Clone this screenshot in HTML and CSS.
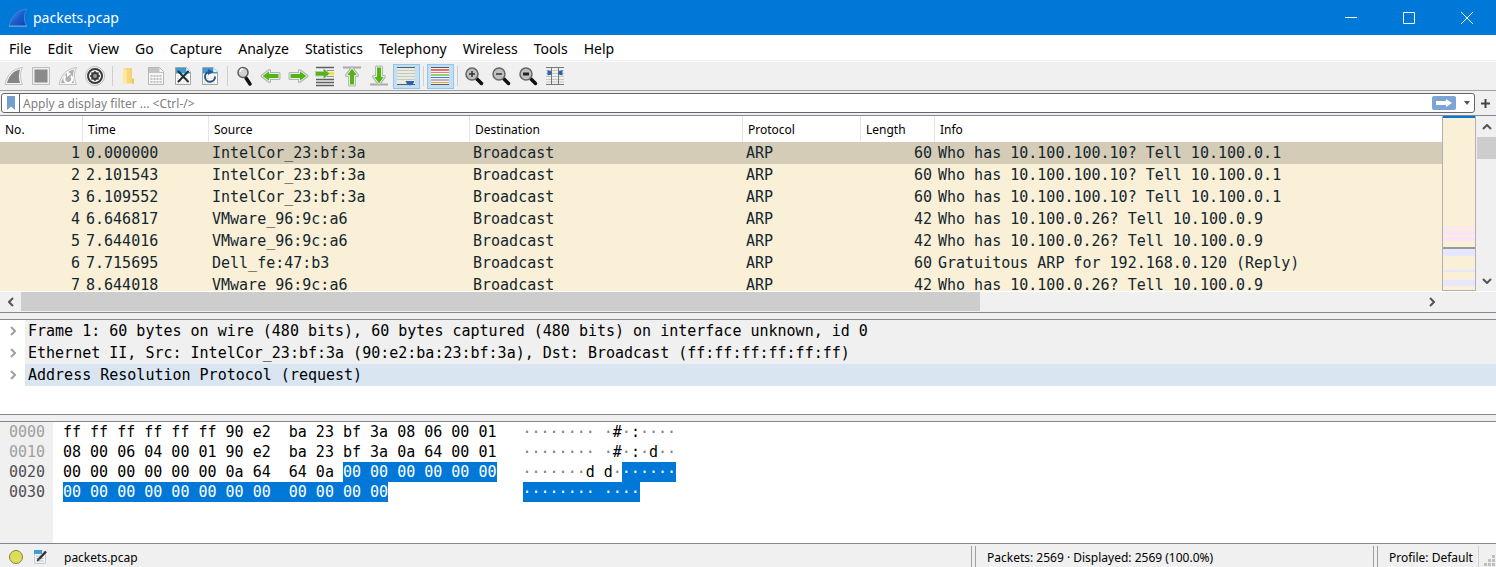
FILE: index.html
```html
<!DOCTYPE html>
<html lang="en">
<head>
<meta charset="utf-8">
<title>packets.pcap</title>
<link rel="stylesheet" href="styles.css">
</head>
<body>
<svg class="defs" aria-hidden="true">
  <defs>
    <linearGradient id="finBlue" x1="0" y1="0" x2="1" y2="1"><stop offset="0" stop-color="#5ea3f2"/><stop offset=".5" stop-color="#1c5fd0"/><stop offset="1" stop-color="#0a3fae"/></linearGradient>
    <linearGradient id="folderFill" x1="0" x2="1"><stop offset="0" stop-color="#fbe08c"/><stop offset="1" stop-color="#f3cd6d"/></linearGradient>
    <g id="doc">
      <path d="M4.500 3.500h11l4 4v13h-15z" fill="#fff" stroke="#a4a4a4"/>
      <path d="M5 4h10.500v4H19v1.500H5z" fill="#3f9ad4"/>
      <path d="M15.500 3.500v4h4z" fill="#e4f1fa"/>
      <path d="M6 12h12M6 14.500h12M6 17h12M6 19h12" stroke="#dedabd" stroke-dasharray="2 1"/>
    </g>
    <path id="arrow" d="M3 12l7.500-5.500v3H20v5h-9.500v3z" fill="#52b416"/>
    <path id="arrowEdge" d="M3 12l7.500-5.500v3H20v5h-9.500v3z" fill="#fff" stroke="#b4b4b4" stroke-width="3" stroke-linejoin="round"/>
    <path id="arrowRim" d="M3 12l7.500-5.500v3H20v5h-9.500v3z" fill="none" stroke="#e6f2de" stroke-width="1" stroke-linejoin="round"/>
    <g id="lens">
      <path d="M15 15l4.500 4.500" stroke="#111" stroke-width="3.500" stroke-linecap="round"/>
      <circle cx="10" cy="10" r="6" fill="#c0c0c0" stroke="#666" stroke-width="1.500"/>
    </g>
  </defs>
</svg>

<header class="titlebar">
  <svg class="logo" viewBox="0 0 20 20"><path d="M1 18.500C3 9 8 2.500 18.500 1 15.500 7 16 13 18.500 18.500z" fill="url(#finBlue)" stroke="#3f86d0" stroke-width="1"/><path d="M1 18h18" stroke="#7fa9d6"/></svg>
  <h1 class="title">packets.pcap</h1>
  <button class="win-btn" aria-label="Minimize"><svg viewBox="0 0 14 14"><path d="M1 6.500h12"/></svg></button>
  <button class="win-btn" aria-label="Maximize"><svg viewBox="0 0 14 14"><path d="M1.500 1.500h11v11h-11z"/></svg></button>
  <button class="win-btn" aria-label="Close"><svg viewBox="0 0 14 14"><path d="M1 1l12 12M13 1L1 13"/></svg></button>
</header>

<nav class="menubar">
  <button>File</button><button>Edit</button><button>View</button><button>Go</button><button>Capture</button><button>Analyze</button><button>Statistics</button><button>Telephony</button><button>Wireless</button><button>Tools</button><button>Help</button>
</nav>

<div class="toolbar" role="toolbar" aria-label="Main toolbar">
  <button aria-label="Start capture"><svg viewBox="0 0 24 24"><path d="M3 20.500C5 11 10 5 20.500 3.500 17.500 9 18 15 20.500 20.500z" fill="#f3f3f3" stroke="#c2c2c2" stroke-width="1"/><path d="M5 19C7 12 11 7 18 5.500 16.500 10 16.500 15 18 19z" fill="#858585"/></svg></button>
  <button aria-label="Stop capture"><svg viewBox="0 0 24 24"><path d="M3.500 3.500h17v17h-17z" fill="#f0f0f0" stroke="#bdbdbd"/><path d="M5.500 5.500h13v13h-13z" fill="#8b8b8b"/></svg></button>
  <button aria-label="Restart capture"><svg viewBox="0 0 24 24"><path d="M3 20.500C5 11 10 5 20.500 3.500 17.500 9 18 15 20.500 20.500z" fill="#f3f3f3" stroke="#c2c2c2"/><path d="M5 19C7 12 11 7 18 5.500 16.500 10 16.500 15 18 19z" fill="#b0b0b0"/><path d="M15 12a4 4 0 1 1-5.500 0" fill="none" stroke="#fff" stroke-width="2"/><path d="M11 7l4 3-4 3z" fill="#fff"/></svg></button>
  <button aria-label="Capture options"><svg viewBox="0 0 24 24"><circle cx="12" cy="12" r="9.500" fill="#f7f7f7" stroke="#bbb"/><circle cx="12" cy="12" r="7" fill="#f7f7f7" stroke="#3a3a3a" stroke-width="2"/><circle cx="12" cy="12" r="4" fill="#3a3a3a"/><path d="M12 7v10M7 12h10M8.500 8.500l7 7M15.500 8.500l-7 7" stroke="#3a3a3a" stroke-width="1.500"/><circle cx="12" cy="12" r="2" fill="#999"/></svg></button>
  <span class="sep"></span>
  <button aria-label="Open"><svg viewBox="0 0 24 24"><path d="M6 4h9v11l2 1v3.500H6z" fill="url(#folderFill)"/><path d="M6 4l3.500 2v14.500L6 19z" fill="#fde9a4"/><path d="M15 14.500h2v5h-2z" fill="#f0c45b"/></svg></button>
  <button aria-label="Save"><svg viewBox="0 0 24 24"><path d="M4.500 3.500h11l4 4v13h-15z" fill="#f7f7f7" stroke="#b5b5b5"/><path d="M5 4h10.500v4H19v1H5z" fill="#c4c4c4"/><path d="M6.500 12h12M6.500 15h12M6.500 18h12" stroke="#c2c2c2" stroke-width="2" stroke-dasharray="2 1"/></svg></button>
  <button aria-label="Close file"><svg viewBox="0 0 24 24"><use href="#doc"/><path d="M7.500 7.500l9.500 10M17 7.500L7.500 17.500" stroke="#20303a" stroke-width="2" stroke-linecap="round"/></svg></button>
  <button aria-label="Reload"><svg viewBox="0 0 24 24"><use href="#doc"/><path d="M10.500 8a5 5 0 1 0 6.500 4.500" fill="none" stroke="#2a5792" stroke-width="2"/><path d="M10 5l5.500 3-5.500 3z" fill="#2a5792"/></svg></button>
  <span class="sep"></span>
  <button aria-label="Find packet"><svg viewBox="0 0 24 24"><path d="M14 14l4 6" stroke="#111" stroke-width="3.500" stroke-linecap="round"/><circle cx="11" cy="8.500" r="5" fill="#d2d2d2" stroke="#5f5f5f" stroke-width="1.500"/><path d="M8 8a3 3 0 0 1 3-3" fill="none" stroke="#fff" stroke-width="1.500"/></svg></button>
  <button aria-label="Previous packet"><svg viewBox="0 0 24 24"><use href="#arrowEdge"/><use href="#arrow"/><use href="#arrowRim"/></svg></button>
  <button aria-label="Next packet"><svg viewBox="0 0 24 24"><g transform="rotate(180 12 12)"><use href="#arrowEdge"/><use href="#arrow"/><use href="#arrowRim"/></g></svg></button>
  <button aria-label="Go to packet"><svg viewBox="0 0 24 24"><path d="M3 3.500h18M3 15.500h18M3 18.500h18M3 21.500h18" stroke="#5b625d" stroke-width="1.500"/><path d="M14 6.500h7M14 12.500h7" stroke="#8b928c"/><path d="M15 8h6v3h-6z" fill="#fbe23a"/><path d="M16.500 9.500l-6-5v3H2.500v4.500h8v3z" fill="#52b416" stroke="#b8c8ae"/></svg></button>
  <button aria-label="First packet"><svg viewBox="0 0 24 24"><path d="M3 3.500h18" stroke="#aaa" stroke-width="2"/><g transform="translate(0 1) rotate(90 12 12)"><use href="#arrowEdge"/><use href="#arrow"/><use href="#arrowRim"/></g></svg></button>
  <button aria-label="Last packet"><svg viewBox="0 0 24 24"><path d="M3 20.500h18" stroke="#aaa" stroke-width="2"/><g transform="translate(0 -1) rotate(270 12 12)"><use href="#arrowEdge"/><use href="#arrow"/><use href="#arrowRim"/></g></svg></button>
  <button class="on" aria-pressed="true" aria-label="Auto scroll"><svg viewBox="0 0 24 24"><path d="M3 4h18v16H3z" fill="#e9ebdf"/><path d="M3 3.500h18M3 20.500h18" stroke="#555b5e"/><path d="M3 6.500h18M3 9.500h18M3 12.500h18M3 15.500h18" stroke="#c3c8c2"/><path d="M11.500 17h9l-1.500 3-3 1.500-3-1.500z" fill="#2f62ad"/></svg></button>
  <span class="sep"></span>
  <button class="on" aria-pressed="true" aria-label="Colorize"><svg viewBox="0 0 24 24"><path d="M3 3h18v18H3z" fill="#f3f5f2"/><path d="M3 3.500h18M3 20.500h18" stroke="#555b5e"/><path d="M3 6h18" stroke="#ef3c3c" stroke-width="1.500"/><path d="M3 8.500h18" stroke="#e87c7c"/><path d="M3 11h18" stroke="#62cf3c" stroke-width="1.500"/><path d="M3 13.500h18" stroke="#4378cb"/><path d="M3 16h18" stroke="#93639f"/><path d="M3 18.500h18" stroke="#d2a52e"/></svg></button>
  <span class="sep"></span>
  <button aria-label="Zoom in"><svg viewBox="0 0 24 24"><use href="#lens"/><path d="M7 10h6M10 7v6" stroke="#333" stroke-width="1.500"/></svg></button>
  <button aria-label="Zoom out"><svg viewBox="0 0 24 24"><use href="#lens"/><path d="M7 10h6" stroke="#333" stroke-width="1.500"/></svg></button>
  <button aria-label="Normal size"><svg viewBox="0 0 24 24"><use href="#lens"/><path d="M7 10h6" stroke="#222" stroke-width="3"/></svg></button>
  <button aria-label="Resize columns"><svg viewBox="0 0 24 24"><path d="M3 3.500h18M3 20.500h18" stroke="#777"/><path d="M3 6.500h18M3 9.500h18M3 12.500h18M3 15.500h18M3 18h18" stroke="#c6cac5"/><path d="M8.500 3v18M15.500 3v18" stroke="#777"/><path d="M4.500 6l4 1.500v3l-4 1zM19.500 6l-4 1.500v3l4 1z" fill="#2b63ae"/></svg></button>
</div>

<div class="filterbar">
  <div class="filter">
    <button class="bookmark" aria-label="Bookmarks"><svg viewBox="0 0 10 14"><path d="M1 0h8v14l-4-3.500L1 14z" fill="#729fcf"/></svg></button>
    <input type="text" aria-label="Display filter" placeholder="Apply a display filter ... &lt;Ctrl-/&gt;">
    <button class="apply" aria-label="Apply filter"><svg viewBox="0 0 24 14"><rect width="24" height="14" rx="2" fill="#7ba5d4"/><path d="M4 5h10V3l6 4-6 4V9H4z" fill="#fff"/></svg></button>
    <button class="drop" aria-label="Recent filters"><svg viewBox="0 0 8 4"><path d="M1 0h6L4 4z" fill="#555"/></svg></button>
  </div>
  <button class="add" aria-label="Add filter button"><svg viewBox="0 0 9 9"><path d="M4.500 0v9M0 4.500h9" stroke="#444" stroke-width="2"/></svg></button>
</div>

<main class="panes">
  <section class="pane list" aria-label="Packet list">
    <div class="list-body">
      <div class="packets">
        <table>
          <colgroup><col class="c-no"><col class="c-time"><col class="c-addr"><col class="c-dest"><col class="c-proto"><col class="c-len"><col></colgroup>
          <thead><tr><th>No.</th><th>Time</th><th>Source</th><th>Destination</th><th>Protocol</th><th>Length</th><th>Info</th></tr></thead>
          <tbody>
            <tr class="current"><td class="num">1</td><td>0.000000</td><td>IntelCor_23:bf:3a</td><td>Broadcast</td><td>ARP</td><td class="num">60</td><td>Who has 10.100.100.10? Tell 10.100.0.1</td></tr>
            <tr><td class="num">2</td><td>2.101543</td><td>IntelCor_23:bf:3a</td><td>Broadcast</td><td>ARP</td><td class="num">60</td><td>Who has 10.100.100.10? Tell 10.100.0.1</td></tr>
            <tr><td class="num">3</td><td>6.109552</td><td>IntelCor_23:bf:3a</td><td>Broadcast</td><td>ARP</td><td class="num">60</td><td>Who has 10.100.100.10? Tell 10.100.0.1</td></tr>
            <tr><td class="num">4</td><td>6.646817</td><td>VMware_96:9c:a6</td><td>Broadcast</td><td>ARP</td><td class="num">42</td><td>Who has 10.100.0.26? Tell 10.100.0.9</td></tr>
            <tr><td class="num">5</td><td>7.644016</td><td>VMware_96:9c:a6</td><td>Broadcast</td><td>ARP</td><td class="num">42</td><td>Who has 10.100.0.26? Tell 10.100.0.9</td></tr>
            <tr><td class="num">6</td><td>7.715695</td><td>Dell_fe:47:b3</td><td>Broadcast</td><td>ARP</td><td class="num">60</td><td>Gratuitous ARP for 192.168.0.120 (Reply)</td></tr>
            <tr><td class="num">7</td><td>8.644018</td><td>VMware_96:9c:a6</td><td>Broadcast</td><td>ARP</td><td class="num">42</td><td>Who has 10.100.0.26? Tell 10.100.0.9</td></tr>
          </tbody>
        </table>
      </div>
      <div class="minimap"></div>
      <div class="vscroll">
        <button aria-label="Scroll up"><svg viewBox="0 0 10 6"><path d="M1 5l4-4 4 4"/></svg></button>
        <div class="vthumb"></div>
        <button class="end" aria-label="Scroll down"><svg viewBox="0 0 10 6"><path d="M1 1l4 4 4-4"/></svg></button>
      </div>
    </div>
    <div class="hscroll">
      <button aria-label="Scroll left"><svg viewBox="0 0 6 10"><path d="M5 1L1 5l4 4"/></svg></button>
      <div class="htrack"><div class="hthumb"></div></div>
      <button aria-label="Scroll right"><svg viewBox="0 0 6 10"><path d="M1 1l4 4-4 4"/></svg></button>
    </div>
  </section>

  <section class="pane details" aria-label="Packet details">
    <ul>
      <li><button aria-label="Expand frame"><svg viewBox="0 0 6 10"><path d="M1 1l4 4-4 4"/></svg></button><span>Frame 1: 60 bytes on wire (480 bits), 60 bytes captured (480 bits) on interface unknown, id 0</span></li>
      <li><button aria-label="Expand Ethernet"><svg viewBox="0 0 6 10"><path d="M1 1l4 4-4 4"/></svg></button><span>Ethernet II, Src: IntelCor_23:bf:3a (90:e2:ba:23:bf:3a), Dst: Broadcast (ff:ff:ff:ff:ff:ff)</span></li>
      <li class="hover"><button aria-label="Expand ARP"><svg viewBox="0 0 6 10"><path d="M1 1l4 4-4 4"/></svg></button><span>Address Resolution Protocol (request)</span></li>
    </ul>
  </section>

  <section class="pane bytes" aria-label="Packet bytes">
    <div class="offsets"><div>0000</div><div>0010</div><div class="lit">0020</div><div class="lit">0030</div></div>
    <div class="hex">
      <div>ff ff ff ff ff ff 90 e2  ba 23 bf 3a 08 06 00 01</div>
      <div>08 00 06 04 00 01 90 e2  ba 23 bf 3a 0a 64 00 01</div>
      <div>00 00 00 00 00 00 0a 64  64 0a <mark>00 00 00 00 00 00</mark></div>
      <div><mark>00 00 00 00 00 00 00 00  00 00 00 00</mark></div>
    </div>
    <div class="ascii">
      <div>········ ·<b>#</b>·<b>:</b>····</div>
      <div>········ ·<b>#</b>·<b>:</b>·<b>d</b>··</div>
      <div>·······<b>d</b> <b>d</b>·<mark>······</mark></div>
      <div><mark>········ ····</mark></div>
    </div>
  </section>
</main>

<footer class="status">
  <button aria-label="Expert information"><svg class="expert" viewBox="0 0 16 16"><circle cx="8" cy="8" r="6.500" fill="#dede5c" stroke="#85853c"/></svg></button>
  <button aria-label="File comments"><svg class="note" viewBox="0 0 16 16"><path d="M2.500 1.500h8l3 3v10h-11z" fill="#f3f5f6" stroke="#c4ccd0"/><path d="M2 1h8v4H2z" fill="#399ed6"/><path d="M4 7h7M4 9.500h8M4 12h8" stroke="#bcc5c9"/><path d="M7 10l7-7.500" stroke="#2e3133" stroke-width="2.500"/><path d="M5 12.500l.5-3.500 2.500 2z" fill="#2e3133"/></svg></button>
  <span class="file">packets.pcap</span>
  <span class="cell counts">Packets: 2569 · Displayed: 2569 (100.0%)</span>
  <span class="cell profile">Profile: Default</span>
  <svg class="grip" viewBox="0 0 12 12"><path d="M8 0h3v3H8zM4 4h3v3H4zM8 4h3v3H8zM0 8h3v3H0zM4 8h3v3H4zM8 8h3v3H8z" fill="#bfbfbf"/></svg>
</footer>
</body>
</html>
```

FILE: styles.css
```css
* { box-sizing: border-box; }
html, body { height: 100%; }
body {
  margin: 0;
  display: flex;
  flex-direction: column;
  overflow: hidden;
  background: #f0f0f0;
  color: #000;
  font: 12px/16px "Noto Sans", sans-serif;
}
button {
  display: flex;
  align-items: center;
  justify-content: center;
  padding: 0;
  border: 0;
  background: none;
  color: inherit;
  font: inherit;
}
svg { display: block; flex: none; }
.defs { position: absolute; width: 0; height: 0; }

/* Title bar */
.titlebar {
  display: flex;
  align-items: center;
  flex: none;
  height: 35px;
  padding-left: 8px;
  background: #0078d7;
  color: #fff;
}
.logo { width: 20px; height: 20px; }
.title {
  flex: 1;
  margin: 0 0 0 5px;
  font-size: 14px;
  line-height: 20px;
  font-weight: 400;
}
.win-btn { width: 58px; height: 32px; }
.win-btn svg { width: 14px; height: 14px; fill: none; stroke: #fff; }

/* Menus */
.menubar {
  display: flex;
  gap: 16px;
  flex: none;
  height: 26px;
  padding: 2px 9px 0;
  border-bottom: 1px solid #f0f0f0;
  background: #fff;
  font-size: 14px;
  line-height: 20px;
}

/* Toolbar */
.toolbar {
  display: flex;
  align-items: center;
  flex: none;
  height: 30px;
  padding: 0 1px;
  border-top: 1px solid #fafafa;
  border-bottom: 1px solid #a0a0a0;
}
.toolbar button { width: 27px; height: 25px; padding-right: 1px; }
.toolbar svg { width: 24px; height: 24px; }
.toolbar .on { border: 1px solid #92c4ec; background: #c3dff5; }
.sep { width: 1px; height: 20px; margin: 0 3px; background: #cfcfcf; }

/* Display filter */
.filterbar {
  display: flex;
  align-items: center;
  flex: none;
  height: 24px;
  padding-left: 1px;
}
.filter {
  display: flex;
  align-items: center;
  flex: 1;
  height: 20px;
  border: 1px solid #66666a;
  border-radius: 3px;
  background: #fff;
}
.bookmark { width: 18px; height: 18px; border-right: 1px solid #66666a; }
.bookmark svg { width: 10px; height: 14px; }
.filter input {
  flex: 1;
  min-width: 0;
  height: 18px;
  padding: 0 3px;
  border: 0;
  outline: 0;
  background: none;
  font: inherit;
}
.filter input::placeholder { color: #808080; opacity: 1; }
.apply svg { width: 24px; height: 14px; }
.drop { width: 18px; padding-left: 3px; }
.drop svg { width: 8px; height: 4px; }
.add { width: 21px; height: 20px; }
.add svg { width: 9px; height: 9px; }

/* Panes */
.panes {
  display: flex;
  flex-direction: column;
  gap: 6px;
  flex: 1;
  min-height: 0;
  font-family: "DejaVu Sans Mono", monospace;
  font-size: 15px;
  line-height: 22px;
}
.pane {
  min-height: 0;
  overflow: hidden;
  border-top: 1px solid #828790;
  border-bottom: 1px solid #828790;
  background: #fff;
}
.list { display: flex; flex-direction: column; flex: 196 1 0; }
.list-body { display: flex; flex: 1; min-height: 0; }
.packets { flex: 1; min-width: 0; overflow: hidden; background: #faefd7; }
table { width: 100%; border-collapse: collapse; table-layout: fixed; }
.c-no { width: 83px; }
.c-time { width: 126px; }
.c-addr { width: 261px; }
.c-dest { width: 273px; }
.c-proto { width: 118px; }
.c-len { width: 74px; }
th {
  height: 26px;
  padding: 2px 5px 0;
  background: linear-gradient(#e5e5e5, #e5e5e5) right / 1px 100% no-repeat #fff;
  font: 12px/16px "Noto Sans", sans-serif;
  text-align: left;
}
th:last-child { background: #fff; }
td {
  height: 22px;
  padding: 0 3px;
  color: #12272e;
  white-space: nowrap;
}
.num { text-align: right; }
.current { background: #d5ccb7; }

.minimap {
  width: 34px;
  border: 1px solid #b0b0b4;
  border-top: 0;
  background: linear-gradient(
    #0078d7 0 2px, #faefd7 2px 110px,
    #fde2fb 110px 111px, #faefd7 111px 113px,
    #fde2fb 113px 114px, #faefd7 114px 115px,
    #fde2fb 115px 119px, #faefd7 119px 121px,
    #fde2fb 121px 125px, #faefd7 125px 131px,
    #999 131px 133px, #e6e6fe 133px 140px,
    #faefd7 140px 154px, #e6e6fe 154px 156px,
    #faefd7 156px 164px, #e6e6fe 164px 170px,
    #faefd7 170px);
}
.vscroll { display: flex; flex-direction: column; width: 20px; padding-left: 1px; background: #f0f0f0; }
.vscroll button { height: 21px; }
.vscroll .end { margin-top: auto; }
.vthumb { height: 22px; background: #cdcdcd; }
.vscroll svg { width: 10px; height: 6px; }
.hscroll { display: flex; flex: none; height: 21px; padding-right: 54px; background: #f0f0f0; border-top: 1px solid #fff; }
.hscroll button { width: 21px; }
.hscroll svg, .details svg { width: 6px; height: 10px; }
.hscroll svg, .vscroll svg { fill: none; stroke: #555; stroke-width: 2; }
.htrack { flex: 1; }
.hthumb { width: 68.500%; height: 19px; background: #cdcdcd; }

.details { flex: 94 1 0; }
.details ul { margin: 0; padding: 0; list-style: none; }
.details li { display: flex; height: 22px; white-space: pre; }
.details button { width: 25px; }
.details svg { fill: none; stroke: #a0a0a0; stroke-width: 2; }
.details span { flex: 1; padding-left: 3px; background: #f0f0f0; }
.details .hover span { background: #d9e6f2; }

.bytes { display: flex; flex: 121 1 0; line-height: 20px; }
.hex > div, .ascii > div { height: 20px; white-space: pre; }
.bytes mark { display: inline-block; background: #0078d7; color: #fff; }
.bytes b { color: #000; font-weight: 400; }
.offsets { width: 53px; padding-left: 9px; background: #f0f0f0; color: #a0a0a0; }
.offsets .lit { color: #505050; }
.hex { padding: 0 26px 0 10px; }
.ascii { color: #808080; }

/* Status bar */
.status { display: flex; align-items: center; flex: none; height: 23px; padding: 2px 0 0 8px; }
.status button { width: 24px; }
.expert, .note { width: 16px; height: 16px; margin-right: 8px; }
.file { flex: 1; padding: 2px 0 0 8px; }
.cell {
  height: 21px;
  padding: 4px 0 0 15px;
  border-left: 1px solid #a0a0a0;
  background: linear-gradient(#a0a0a0, #a0a0a0) 3px 0 / 1px 100% no-repeat;
  white-space: nowrap;
}
.counts { width: 402px; }
.profile { width: 106px; border-right: 1px solid #d0d0d0; }
.grip { align-self: flex-end; width: 12px; height: 12px; margin-left: 5px; }
```
